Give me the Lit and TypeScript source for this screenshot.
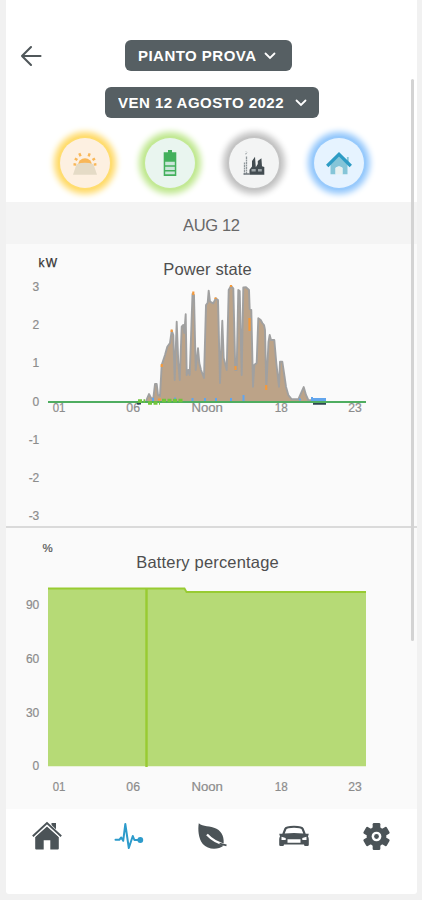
import { LitElement, html, svg, css } from "lit";
import { customElement } from "lit/decorators.js";

const POWER: [number, number][] = [
  [146, 401], [149, 394], [151, 398], [153.3, 398.3], [155, 384], [156.7, 384], [158, 395], [160, 396],
  [161.7, 365], [165, 355], [167.3, 346.7], [170, 343], [171.7, 330.7], [173.3, 335], [174.7, 380],
  [176.7, 321.7], [178.3, 363], [179.7, 380], [181.7, 326.7], [183.3, 325], [184.3, 333], [185.7, 314.3],
  [186.7, 375], [188.3, 370], [189.7, 375], [192.5, 294], [194, 295], [195.7, 370], [198, 348.3],
  [199.3, 363], [201, 370], [204, 378], [206, 305], [207.7, 302.7], [208.7, 290.7], [210, 301.7],
  [213.3, 303.3], [215.7, 298.3], [218, 300], [220, 383], [222.3, 320.7], [223.7, 358], [226.7, 370],
  [228.7, 290], [231, 286], [233.3, 288.3], [235.3, 370], [236.7, 370], [238.3, 290], [239.7, 291],
  [241.7, 375], [243.3, 287.5], [246, 287.3], [249, 290], [249.7, 309], [251.3, 310], [253, 386.7],
  [254.3, 365], [256.7, 363], [258.3, 318.3], [260.7, 320], [262.3, 323], [264, 325], [265, 330],
  [266.3, 388], [268.5, 342], [269.7, 335], [271, 340], [274.3, 340], [276.3, 363], [279, 386.7],
  [280, 361.7], [282.3, 361.7], [284.3, 375], [286, 386.7], [288.3, 395], [291.7, 399.3],
  [298.3, 399.3], [301.7, 391.7], [303.7, 387], [306, 395], [308.3, 400], [325, 401],
];
const powerLine = "M" + POWER.map((p) => p.join(" ")).join("L");

const HOURS: [string, number, number][] = [
  ["01", 59, 12.7], ["06", 133.2, 13.7], ["Noon", 207.2, 31.5], ["18", 281.2, 13], ["23", 355, 13.5],
];
const hours = (y: number) =>
  HOURS.map(([t, x, w]) => svg`<text class="tick mid" x=${x} y=${y} textLength=${w} lengthAdjust="spacingAndGlyphs">${t}</text>`);
const levels = (rows: [string, number][]) =>
  rows.map(([t, y]) => svg`<text class="tick end" x="39.3" y=${y}>${t}</text>`);

const sun = html`<svg viewBox="0 0 26 26" width="26" height="26">
  <path d="M6 15a7 6.800 0 0 1 14 0z" fill="#f9b758" />
  <path d="M1.500 14.300l2.700.3M2.800 8.500l2.600 1.600M7.300 3.300l1.300 3M13 2.700v0M17.700 3.300l-1.100 3M23 8.500l-2.500 1.600M24.400 14.300l-2.600.3" stroke="#f9b758" stroke-width="2.400" fill="none" />
  <path d="M4.500 14.200Q13 11.500 21.500 14.200L25 24.800H1z" fill="#e5dbc6" />
</svg>`;
const battery = html`<svg viewBox="0 0 14 26" width="14" height="26">
  <path d="M5 0h4v2.300h4.300V26H.7V2.300H5z" fill="#43b05c" />
  <path d="M2.200 11.700h9.600v3.600H2.200zM2.200 16.800h9.600v3.200H2.200zM2.200 21.500h9.600v2.800H2.200z" fill="#cbe6da" />
</svg>`;
const factory = html`<svg viewBox="0 0 24 26" width="24" height="26">
  <path d="M2.500 24.500V12M4.500 24V6" stroke="#90979b" stroke-width="1.300" stroke-dasharray="2 .5" />
  <path d="M4 1.500l1 1M3 4l2-.5" stroke="#a9afb2" stroke-width="1" />
  <path d="M1.500 24h6" stroke="#70797e" stroke-width="1.500" />
  <path d="M7.500 24.700v-5L10 16.500V11l3-4.300.8 10.500 2-3.200V11l3.600-2.700.6 8L22.300 17v7.700z" fill="#434c51" />
  <path d="M9.500 19h4.200v2.500H9.500zM16 19h3.800v2.500H16z" fill="#9ca4a8" />
</svg>`;
const house = html`<svg viewBox="0 0 26 24" width="26" height="24">
  <path d="M4.500 13.500L13 5.500l8.500 8V23.300h-5v-6.500q-3.500-3-7 0v6.500h-5z" fill="#85c5d8" />
  <path d="M9.500 23.300V17q3.500-3 7 0v6.300z" fill="#e8f1f0" />
  <path d="M21.800 6v5" stroke="#85c5d8" stroke-width="1.800" />
  <path d="M1.200 15L13 3.300 24.800 15" fill="none" stroke="#2e9cc5" stroke-width="3.300" />
</svg>`;

const navHome = html`<svg viewBox="0 0 30 30" width="30" height="30">
  <path d="M19.500 2h4.500v8l-4.500-4z" />
  <path d="M15 5.500L26.800 16v11.500q0 1-1 1h-7.500v-9.200h-6.600v9.200H4.200q-1 0-1-1V16z" />
  <path d="M.8 15.800L15 2.200l14.200 13.600" fill="none" stroke="#fff" stroke-width="3.600" />
  <path d="M.8 15.300L15 2l14.200 13.300" fill="none" stroke="#4b5357" stroke-width="1.900" />
</svg>`;
const navPulse = html`<svg viewBox="0 0 30 30" width="30" height="30">
  <path d="M1.500 18.800h3.800l1.900-2.300 2 3.300L11.300 3l3.500 24 4-12 1.600 4h4" fill="none" stroke="#2d9bcb" stroke-width="2" stroke-linejoin="round" stroke-linecap="round" />
  <circle cx="26.300" cy="19" r="2.900" fill="#2d9bcb" />
</svg>`;
const navLeaf = html`<svg viewBox="0 0 30 30" width="30" height="30">
  <path d="M1.800 2.200C6 5.800 13 4.500 19.500 7.800C25.500 11 27.500 17 26.500 24.800C21 29 11 29 5.800 23C1.300 17.500.8 8 1.800 2.200z" />
  <path d="M10 13.500C15 19 21 22.500 29.500 24" fill="none" stroke="#fff" stroke-width="2.300" />
  <path d="M22.500 22.700L29.500 24.300" fill="none" stroke="#4b5357" stroke-width="1.700" />
</svg>`;
const navCar = html`<svg viewBox="0 0 30 22" width="30" height="22">
  <path d="M1 11.500L.2 8.800h3.100L5.300 3.500Q6.200.8 15 .8T24.700 3.500l2 5.300h3.100L29 11.500q.8 1 .8 3v5.300q0 1.200-1.200 1.200h-2.400q-1.200 0-1.200-1.500H5Q5 21 3.800 21H1.400Q.2 21 .2 19.800v-5.300q0-2 .8-3z" />
  <path d="M5.700 8.500L7.400 4.300Q8 2.700 15 2.700t7.600 1.600l1.700 4.200q-9.300-1.200-18.600 0z" fill="#fff" />
  <path d="M2.500 11.800l4.200 1.300v1.800H2.500zM27.500 11.800l-4.200 1.300v1.800h4.200zM8.500 14.300h13v3.500h-13z" fill="#fff" />
</svg>`;
const tooth = "M10.300 6.500V2.200Q10.300 1 11.500 1h5q1.200 0 1.200 1.200v4.300z";
const navGear = html`<svg viewBox="0 0 28 28" width="29" height="29">
  <circle cx="14" cy="14" r="9.500" />
  ${[0, 60, 120, 180, 240, 300].map((a) => svg`<path d=${tooth} transform="rotate(${a} 14 14)" />`)}
  <circle cx="14" cy="14" r="4.700" fill="#fff" />
  <circle cx="14" cy="14" r="2.300" />
</svg>`;

const chevron = html`<svg class="chev" viewBox="0 0 12 8" width="12" height="8">
  <path d="M1.500 1.500L6 5.900l4.500-4.400" fill="none" stroke="#fff" stroke-width="1.800" stroke-linecap="round" />
</svg>`;

@customElement("app-root")
export class AppRoot extends LitElement {
  static styles = css`
    :host { display: block; height: 900px; background: #f1f1f1; font-family: "Liberation Sans", Arial, sans-serif; overflow: hidden; }
    * { box-sizing: border-box; }
    svg { display: block; }
    .phone { position: relative; width: 411px; height: 894px; margin-left: 6px; background: #fff; border-radius: 0 0 3px 3px; display: flex; flex-direction: column; }
    header { height: 202px; padding: 40px 0 0; flex: none; }
    .top { display: grid; grid-template-columns: 119px auto 1fr; align-items: center; }
    .back { margin-left: 14px; }
    .pill { display: flex; align-items: center; justify-content: space-between; background: #565f63; color: #fff; border: 0; border-radius: 6px; font-weight: bold; padding: 0 16px 0 13px; height: 31px; white-space: nowrap; }
    .plant { width: 167px; }
    .date { width: 214px; margin: 16px 0 0 99px; padding-right: 12px; }
    .pill svg { flex: none; }
    .circles { display: flex; gap: 34.500px; padding: 20px 0 0 54px; }
    .circle { width: 50px; height: 50px; border-radius: 50%; display: flex; align-items: center; justify-content: center; flex: none; }
    .solar { background: #fdf0e1; box-shadow: 0 0 0 2px #ffdd70, 0 0 6px 6px #ffda68; }
    .batt { background: #e9f5ef; box-shadow: 0 0 0 2px #c3e995, 0 0 6px 6px #c0e890; }
    .grid { background: #f3f4f4; box-shadow: 0 0 0 2px #c4c4c4, 0 0 6px 6px #c2c2c2; }
    .home { background: #e6f3ff; box-shadow: 0 0 0 2px #98cafc, 0 0 6px 6px #93c7fc; }
    .day { height: 42px; background: #f4f4f4; display: flex; align-items: center; justify-content: center; flex: none; padding-top: 4px; }
    .chart { background: #fafafa; flex: none; }
    .power { border-bottom: 2px solid #dadada; }
    .tick { font-size: 12px; fill: #8c8c8c; stroke: #8c8c8c; stroke-width: .2px; }
    .mid { text-anchor: middle; }
    .end { text-anchor: end; }
    .title { font-size: 16.500px; fill: #4e4e4e; text-anchor: middle; }
    .unit { font-size: 12px; fill: #333; stroke: #333; stroke-width: .25px; }
    .pct { font-size: 11.500px; fill: #555; stroke: #555; stroke-width: .2px; }
    nav { display: flex; justify-content: space-between; align-items: center; height: 54px; padding: 0 26px 0 25.500px; fill: #4b5357; flex: none; }
    .scroll { position: absolute; left: 404.500px; top: 79px; width: 3px; height: 562px; border-radius: 2px; background: #d3d3d3; }
  `;

  label(text: string, width: number, cls = "") {
    const thin = cls === "thin";
    return html`<svg width=${width} height="20" viewBox="0 0 ${width} 20"><text x="0" y=${thin ? 15.7 : 15.3}
      font-size=${thin ? 16.5 : 15} fill=${thin ? "#686868" : "#fff"} textLength=${width}>${text}</text></svg>`;
  }

  render() {
    return html`<div class="phone">
      <header>
        <div class="top">
          <svg class="back" viewBox="0 0 24 24" width="24" height="24"><path d="M11 3L2 12l9 9M2 12h18.500" fill="none" stroke="#50575a" stroke-width="2.100" stroke-linecap="round" stroke-linejoin="round" /></svg>
          <div class="pill plant">${this.label("PIANTO PROVA", 118)}${chevron}</div>
        </div>
        <div class="pill date">${this.label("VEN 12 AGOSTO 2022", 165.5)}${chevron}</div>
        <div class="circles">
          <div class="circle solar">${sun}</div>
          <div class="circle batt">${battery}</div>
          <div class="circle grid">${factory}</div>
          <div class="circle home">${house}</div>
        </div>
      </header>
      <div class="day">${this.label("AUG 12", 57, "thin")}</div>
      <div class="chart power">
        <svg viewBox="6 244 411 282" width="411" height="282">
          <text class="unit" x="38.500" y="266.500" textLength="18.500">kW</text>
          <text class="title" x="207.500" y="274.500" textLength="88.500">Power state</text>
          ${levels([["3", 291], ["2", 329.2], ["1", 367.4], ["0", 405.5], ["-1", 443.7], ["-2", 481.9], ["-3", 520.2]])}
          ${hours(412)}
          <path d="${powerLine}V401.500H146z" fill="#bca388" />
          <path d=${powerLine} fill="none" stroke="#a0a0a0" stroke-width="1.900" stroke-linejoin="round" />
          <path d="M171.700 332v-2.500M193.300 295v-3.500M215.500 299v-1.500M231 287v-2M249.500 318v13M161.800 364v3M235.500 366v4M266.200 385v5M158 399.500h3" stroke="#f49a3c" stroke-width="2.200" />
          <path d="M153 398v3M175 397.500v3M192.500 398v3M205 398v3M216 398v3M231 398v3M243.500 395v6M300 398.500v2M312 397v4" stroke="#62a5ed" stroke-width="2" />
          <path d="M312 399.500H326" stroke="#62a5ed" stroke-width="3" />
          <path d="M313 403.800H326M137 403.500h4" stroke="#2d4550" stroke-width="2" />
          <path d="M48 401.900H366" stroke="#4fad60" stroke-width="2" />
          <path d="M138 401h7M148 403h12M162 400.500h22" stroke="#70c53b" stroke-width="3.300" stroke-dasharray="4 1.500" />
        </svg>
      </div>
      <div class="chart">
        <svg viewBox="6 528 411 281" width="411" height="281">
          <text class="pct" x="42.500" y="551.500">%</text>
          <text class="title" x="207.500" y="568.300" textLength="142.500">Battery percentage</text>
          <path d="M48 588.500H184.500L186 592H366V766.300H48z" fill="#b6da76" />
          <path d="M48 588.500H184.500L186.500 592H366" fill="none" stroke="#98cb32" stroke-width="1.800" />
          <path d="M146.500 588V767" stroke="#98cb32" stroke-width="2.400" />
          ${levels([["90", 609.3], ["60", 663], ["30", 716.8], ["0", 770.2]])}
          ${hours(791)}
        </svg>
      </div>
      <nav>${navHome}${navPulse}${navLeaf}${navCar}${navGear}</nav>
      <div class="scroll"></div>
    </div>`;
  }
}
